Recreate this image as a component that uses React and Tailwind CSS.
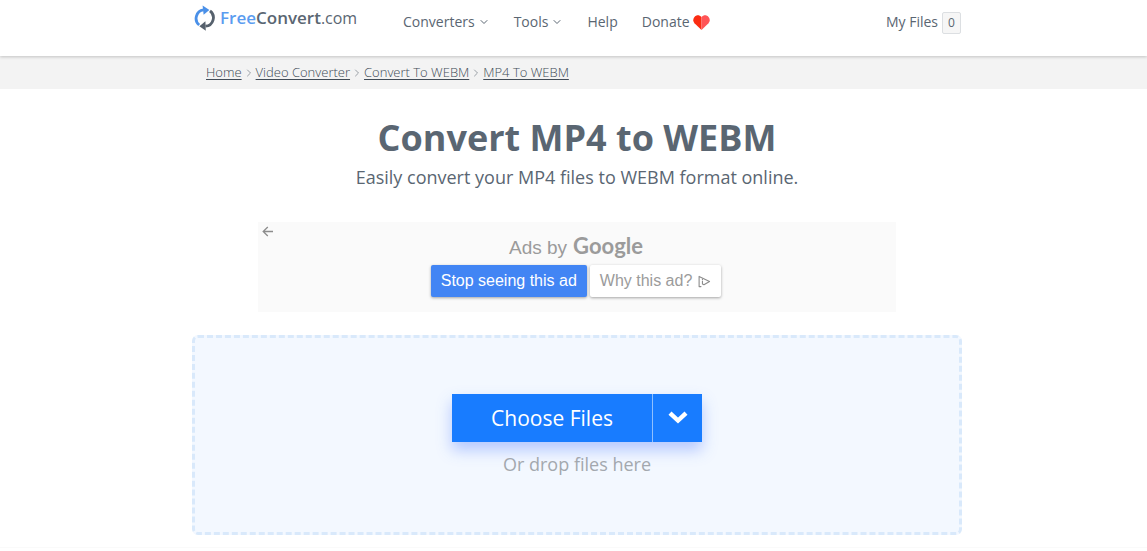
import { ChevronDown, ChevronRight } from 'lucide-react'

const NAV = [
  { label: 'Converters', menu: true },
  { label: 'Tools', menu: true },
  { label: 'Help' },
  { label: 'Donate', heart: true },
]

const CRUMBS = ['Home', 'Video Converter', 'Convert To WEBM', 'MP4 To WEBM']

function LogoMark() {
  return (
    <svg width="22" height="26" viewBox="0 0 22 26" fill="none" className="shrink-0">
      <path d="M5.2 20A8.6 8.6 0 0 1 9.5 4.9" stroke="#4a90e8" strokeWidth="2.8" />
      <path d="M8.6 0.6 15.4 4.9 9.6 9.8Z" fill="#4a90e8" />
      <path d="M16 5.8A8.6 8.6 0 0 1 11.5 21.2" stroke="#56616d" strokeWidth="2.8" />
      <path d="M11.4 16.2 5.4 21.2 11.8 25.8Z" fill="#56616d" />
    </svg>
  )
}

function Heart() {
  return (
    <svg width="17" height="15" viewBox="0 0 16 14">
      <path d="M8 14 1.4 7.8C-2.2 3.4 3.6-2.6 8 1.8Z" fill="#fb2c12" />
      <path d="M8 14 14.6 7.8C18.2 3.4 12.4-2.6 8 1.8Z" fill="#ff5456" />
    </svg>
  )
}

function AdChoices() {
  return (
    <svg width="13" height="13" viewBox="0 0 14 13" fill="none" stroke="#8c8c8c" strokeWidth="1.2" strokeLinejoin="round" strokeLinecap="round">
      <path d="M3.2 12H1.2V1L12.4 6.5 6.4 10 4.8 9.2V6" />
      <path d="M4.8 4v.4" />
    </svg>
  )
}

function AdPanel() {
  return (
    <section className="relative mx-auto mt-[31px] flex h-[90px] max-w-[638px] flex-col items-center bg-[#fafafa] pt-2.5 pr-0.5 font-['Liberation_Sans',sans-serif]">
      <button aria-label="Back" className="absolute left-1 top-1">
        <svg width="11" height="11" viewBox="0 0 11 11" fill="none" stroke="#8c8c8c" strokeWidth="1.3">
          <path d="M11 5.5H1.2M5.8 1 1.2 5.5 5.8 10" />
        </svg>
      </button>
      <p className="flex h-7 items-baseline gap-1.5 text-[19px] leading-7 text-[#9b9b9b]">
        Ads by <span className="font-['Lato',sans-serif] text-[22px] font-bold">Google</span>
      </p>
      <div className="mt-[5px] flex gap-[3px] text-base">
        <button className="h-8 rounded-xs bg-[#4285f4] px-2.5 text-white shadow-[0_1px_3px_rgba(0,0,0,0.35)]">Stop seeing this ad</button>
        <button className="flex h-8 items-center gap-1.5 rounded-xs bg-white px-2.5 text-[#9b9b9b] shadow-[0_1px_3px_rgba(0,0,0,0.35)]">
          Why this ad? <AdChoices />
        </button>
      </div>
    </section>
  )
}

function DropZone() {
  return (
    <section className="mt-[23px] flex flex-col items-center rounded-md border-3 border-dashed border-[#d9e9fb] bg-[#f3f8ff] pt-14 pb-[54px]">
      <div className="flex h-12 bg-[#187cff] text-white shadow-[0_8px_14px_rgba(60,110,255,0.35)]">
        <button className="w-[200px] pt-0.5 text-[21px]">Choose Files</button>
        <button aria-label="More sources" className="flex w-[50px] items-center justify-center border-l border-[#8fc0ff] pb-0.5">
          <svg width="20" height="13" viewBox="0 0 20 13" fill="none" stroke="currentColor" strokeWidth="4.4">
            <path d="M2 2.2 10 9.6 18 2.2" />
          </svg>
        </button>
      </div>
      <p className="mt-2 text-lg leading-7 text-[#a3a8ae]">Or drop files here</p>
    </section>
  )
}

export default function App() {
  return (
    <div className="bg-white font-['Open_Sans',sans-serif] text-[#5a6672]">
      <header className="relative h-14 bg-white pl-[7px] shadow-[0_1px_3px_rgba(0,0,0,0.2)]">
        <div className="mx-auto flex max-w-[770px] items-start pt-1">
          <a href="#" className="flex w-[211px] items-center gap-1 pl-0.5 text-[17px] leading-7 font-semibold">
            <LogoMark />
            <span>
              <span className="text-[#5a9cf0]">Free</span>Convert<span className="text-base font-medium">.com</span>
            </span>
          </a>
          <nav className="flex gap-6 pt-1 text-sm leading-7">
            {NAV.map((item) => (
              <a key={item.label} href="#" className="flex items-center gap-[3px]">
                {item.label}
                {item.menu && <ChevronDown size={12} />}
                {item.heart && <Heart />}
              </a>
            ))}
          </nav>
          <a href="#" className="ml-auto flex items-center gap-1 pt-1 pr-px text-sm leading-7">
            My Files
            <span className="mt-0.5 flex h-[22px] w-[19px] items-center justify-center rounded-xs border border-[#dcdfe2] bg-[#f6f6f6] text-xs">0</span>
          </a>
        </div>
      </header>

      <div className="bg-[#f3f3f3] pl-[7px]">
        <nav aria-label="Breadcrumb" className="mx-auto flex h-[33px] max-w-[770px] items-center px-3.5 text-[13px] font-light">
          {CRUMBS.map((crumb, i) => (
            <span key={crumb} className="flex items-center">
              {i > 0 && <ChevronRight size={12} className="mx-px text-[#9aa0a6]" />}
              <a href="#" className="text-[#414c57] underline underline-offset-2">{crumb}</a>
            </span>
          ))}
        </nav>
      </div>

      <div className="pl-[7px]">
        <main className="mx-auto max-w-[770px] pt-6">
          <h1 className="text-center text-4xl leading-[50px] font-bold">Convert MP4 to WEBM</h1>
          <p className="text-center text-lg leading-7">Easily convert your MP4 files to WEBM format online.</p>
          <AdPanel />
          <DropZone />
        </main>
      </div>
      <div className="mt-3 border-t border-[#fafafa]" />
    </div>
  )
}
